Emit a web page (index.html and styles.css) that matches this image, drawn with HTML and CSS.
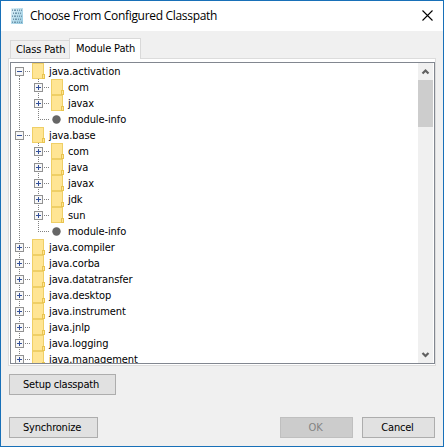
FILE: index.html
```html
<!DOCTYPE html>
<html lang="en">
<head>
<meta charset="utf-8">
<title>Choose From Configured Classpath</title>
<link rel="stylesheet" href="styles.css">
</head>
<body>
<div class="dialog">
  <header class="titlebar">
    <svg class="app-icon" width="12" height="16" viewBox="0 0 12 16" shape-rendering="crispEdges">
      <defs><linearGradient id="sky" x2="1" y2="1"><stop offset="0" stop-color="#e2f2f8"/><stop offset="1" stop-color="#91c8e0"/></linearGradient></defs>
      <path fill="url(#sky)" d="M0 0h12v16H0z"/>
      <path stroke="#6f97ad" stroke-dasharray="1 1 2 1 1 1" d="M1 2.5h10M2 5.5h9M1 8.5h10M2 11.5h9M1 14.5h10"/>
      <path stroke="#94b8ca" stroke-dasharray="1 1 2 1 1 1" d="M1 1.5h10M2 4.5h9M1 7.5h10M2 10.5h9M1 13.5h10"/>
    </svg>
    <h1 class="title">Choose From Configured Classpath</h1>
    <svg class="close" width="11" height="11" viewBox="0 0 11 11"><path d="M.5.5l10 10M10.5.5l-10 10" stroke="#000" stroke-width="1.1"/></svg>
  </header>
  <main class="content">
    <nav class="tabs">
      <div class="tab">Class Path</div>
      <div class="tab tab-active">Module Path</div>
    </nav>
    <section class="panel">
      <div class="viewport">
        <div class="tree" id="tree"></div>
        <div class="scrollbar">
          <svg width="15" height="17" viewBox="0 0 15 17"><path d="M4.5 10.5l3-3 3 3" fill="none" stroke="#606060" stroke-width="2.2"/></svg>
          <div class="thumb"></div>
          <svg class="down" width="15" height="17" viewBox="0 0 15 17"><path d="M4.5 7l3 3 3-3" fill="none" stroke="#606060" stroke-width="2.2"/></svg>
        </div>
      </div>
    </section>
    <div class="setup"><button class="button button-setup">Setup classpath</button></div>
    <footer class="actions">
      <button class="button button-sync">Synchronize</button>
      <button class="button button-ok" disabled>OK</button>
      <button class="button button-cancel">Cancel</button>
    </footer>
  </main>
</div>
<script src="tree.js"></script>
</body>
</html>
```
FILE: styles.css
```css
* { box-sizing: border-box; }
body {
  margin: 0;
  font: 11px/16px "DejaVu Sans Condensed", "DejaVu Sans", sans-serif;
  font-stretch: condensed;
  color: #000;
  overflow: hidden;
}
.dialog {
  width: 444px;
  height: 447px;
  border: 1px solid #1870b8;
  background: #f0f0f0;
  display: flex;
  flex-direction: column;
}
.titlebar {
  height: 30px;
  background: #fff;
  display: flex;
  align-items: center;
  padding: 0 10px;
}
.title {
  margin: 0 auto 0 7px;
  font: 12px/18px "Open Sans", sans-serif;
  letter-spacing: -0.31px;
  white-space: nowrap;
}
.app-icon { margin-top: -1px; }
.close { margin-top: -2px; }
.content {
  flex: 1;
  padding: 7px 7px 8px;
  display: flex;
  flex-direction: column;
}
.tabs {
  height: 20px;
  padding-left: 2px;
  display: flex;
  align-items: flex-end;
  letter-spacing: -0.15px;
}
.tab {
  width: 59px;
  height: 18px;
  border: 1px solid #d9d9d9;
  border-width: 1px 0 0 1px;
  padding-left: 5px;
  line-height: 18px;
  white-space: nowrap;
}
.tab-active {
  width: 72px;
  height: 21px;
  border-right-width: 1px;
  background: #fff;
  margin-bottom: -1px;
  padding-left: 6px;
  line-height: 20px;
  z-index: 1;
}
.panel {
  width: 428px;
  height: 308px;
  border: 1px solid #dcdcdc;
  background: #fff;
  padding: 3px 1px 1px;
}
.viewport {
  width: 425px;
  height: 302px;
  border: 1px solid #828790;
  display: flex;
  overflow: hidden;
}
.tree { flex: 1; height: 300px; overflow: hidden; letter-spacing: -0.1px; }
.row { display: flex; height: 16px; white-space: pre; }
.row svg { flex: none; }
.label { line-height: 18px; }
.scrollbar {
  width: 16px;
  border-right: 1px solid #fff;
  background: #f0f0f0;
  display: flex;
  flex-direction: column;
}
.thumb { height: 47px; background: #cdcdcd; }
.down { margin-top: auto; }
.setup { margin: 8px 0 22px 1px; height: 21px; display: flex; }
.actions { display: flex; margin: 0 1px; height: 21px; }
.button {
  height: 21px;
  padding: 0;
  border: 1px solid #adadad;
  background: #e1e1e1;
  color: #000;
  font: inherit;
  letter-spacing: -0.2px;
  line-height: 18px;
}
.button-setup { width: 107px; text-align: left; padding-left: 13px; }
.button-sync { width: 89px; margin-right: auto; text-align: left; padding-left: 13px; }
.button-ok { width: 73px; margin-right: 9px; padding-right: 2px; background: #ccc; border-color: #bfbfbf; color: #838383; }
.button-cancel { width: 73px; padding-right: 2px; }
```
FILE: tree.js
```js
const rows = [
  [0, "java.activation"], [1, "com"], [1, "javax"], [2, "module-info"],
  [0, "java.base"], [1, "com"], [1, "java"], [1, "javax"], [1, "jdk"], [1, "sun"], [2, "module-info"],
  [0, "java.compiler"], [0, "java.corba"], [0, "java.datatransfer"], [0, "java.desktop"],
  [0, "java.instrument"], [0, "java.jnlp"], [0, "java.logging"], [0, "java.management"]
];
const dots = d => `<path d="${d}" stroke="#808080" stroke-dasharray="1 1"/>`;
const expander = (x, open) =>
  `<path d="M${x + .5} 4.5h8v8h-8z" fill="#f7f7f7" stroke="#919191"/>` +
  `<path d="M${x + 2} 8.5h5${open ? "" : `M${x + 4.5} 6v5`}" stroke="#33509a"/>`;
const folder = x =>
  `<path d="M${x} 0h12v16h-12z" fill="#ffe594"/><path d="M${x + .5} 16V.5h11V12M${x} 15.5h12" fill="none" stroke="#efcf66"/>` +
  `<path d="M${x + 10.5} 15.5v-4h2v4z" fill="#ffe594" stroke="#e9c450"/>`;

document.getElementById("tree").innerHTML = rows.map(([kind, name], i) => {
  const open = kind === 0 && (rows[i + 1] || [0])[0] > 0;
  let art = dots(i === 0 ? "M8.5 9v7" : "M8.5 0v16");
  if (kind === 0) {
    art += dots("M14 8.5h6") + expander(4, open) + folder(21);
  } else {
    art += dots(kind === 2 ? "M27.5 0v9M27 8.5h11" : "M27.5 0v16M33 8.5h5");
    art += kind === 1 ? expander(23, false) + folder(40)
      : `<circle cx="45.5" cy="8.5" r="4.2" fill="#666" shape-rendering="auto"/>`;
  }
  const w = kind ? 57 : 38;
  return `<div class="row"><svg width="${w}" height="16" viewBox="0 0 ${w} 16" shape-rendering="crispEdges">${art}</svg><span class="label">${name}</span></div>`;
}).join("");
```
